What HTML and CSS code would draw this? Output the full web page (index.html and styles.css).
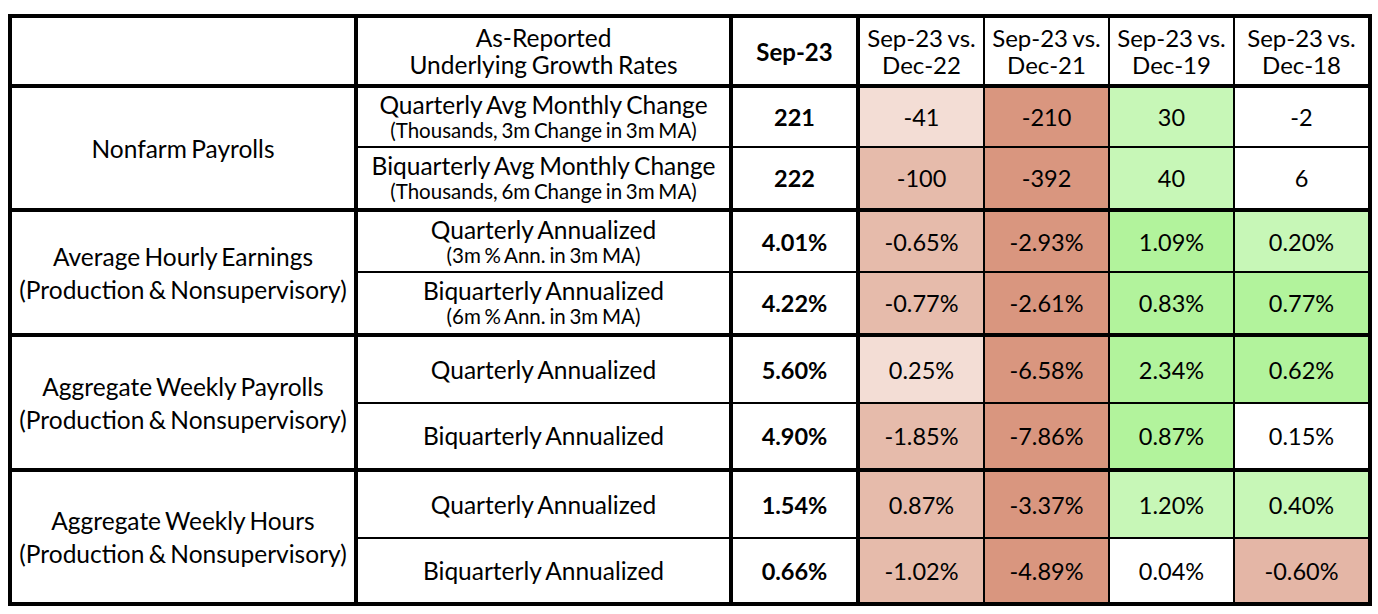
FILE: index.html
```html
<!DOCTYPE html>
<html>
<head>
<meta charset="utf-8">
<link rel="stylesheet" href="styles.css">
</head>
<body>
<table class="grid">
  <colgroup>
    <col class="w-label"><col class="w-desc"><col class="w-cur">
    <col class="w-d1"><col class="w-d2"><col class="w-d3"><col class="w-d4">
  </colgroup>
  <thead>
    <tr class="h-head">
      <th class="label"></th>
      <th class="desc">As-Reported<br>Underlying Growth Rates</th>
      <th class="cur">Sep-23</th>
      <th>Sep-23 vs.<br>Dec-22</th>
      <th>Sep-23 vs.<br>Dec-21</th>
      <th>Sep-23 vs.<br>Dec-19</th>
      <th>Sep-23 vs.<br>Dec-18</th>
    </tr>
  </thead>
  <tbody>
    <tr class="h-a group">
      <td class="label" rowspan="2">Nonfarm Payrolls</td>
      <td class="desc">Quarterly Avg Monthly Change<span class="sub">(Thousands, 3m Change in 3m MA)</span></td>
      <td class="cur">221</td>
      <td class="pink-1">-41</td>
      <td class="red">-210</td>
      <td class="green-1">30</td>
      <td>-2</td>
    </tr>
    <tr class="h-b">
      <td class="desc">Biquarterly Avg Monthly Change<span class="sub">(Thousands, 6m Change in 3m MA)</span></td>
      <td class="cur">222</td>
      <td class="pink-2">-100</td>
      <td class="red">-392</td>
      <td class="green-1">40</td>
      <td>6</td>
    </tr>
    <tr class="h-c group">
      <td class="label" rowspan="2">Average Hourly Earnings<br>(Production &amp; Nonsupervisory)</td>
      <td class="desc">Quarterly Annualized<span class="sub">(3m % Ann. in 3m MA)</span></td>
      <td class="cur">4.01%</td>
      <td class="pink-2">-0.65%</td>
      <td class="red">-2.93%</td>
      <td class="green-2">1.09%</td>
      <td class="green-1">0.20%</td>
    </tr>
    <tr class="h-d">
      <td class="desc">Biquarterly Annualized<span class="sub">(6m % Ann. in 3m MA)</span></td>
      <td class="cur">4.22%</td>
      <td class="pink-2">-0.77%</td>
      <td class="red">-2.61%</td>
      <td class="green-2">0.83%</td>
      <td class="green-2">0.77%</td>
    </tr>
    <tr class="h-e group">
      <td class="label" rowspan="2">Aggregate Weekly Payrolls<br>(Production &amp; Nonsupervisory)</td>
      <td class="desc">Quarterly Annualized</td>
      <td class="cur">5.60%</td>
      <td class="pink-1">0.25%</td>
      <td class="red">-6.58%</td>
      <td class="green-2">2.34%</td>
      <td class="green-2">0.62%</td>
    </tr>
    <tr class="h-f">
      <td class="desc">Biquarterly Annualized</td>
      <td class="cur">4.90%</td>
      <td class="pink-2">-1.85%</td>
      <td class="red">-7.86%</td>
      <td class="green-2">0.87%</td>
      <td>0.15%</td>
    </tr>
    <tr class="h-g group">
      <td class="label" rowspan="2">Aggregate Weekly Hours<br>(Production &amp; Nonsupervisory)</td>
      <td class="desc">Quarterly Annualized</td>
      <td class="cur">1.54%</td>
      <td class="pink-2">0.87%</td>
      <td class="red">-3.37%</td>
      <td class="green-1">1.20%</td>
      <td class="green-1">0.40%</td>
    </tr>
    <tr class="h-h">
      <td class="desc">Biquarterly Annualized</td>
      <td class="cur">0.66%</td>
      <td class="pink-2">-1.02%</td>
      <td class="red">-4.89%</td>
      <td>0.04%</td>
      <td class="pink-3">-0.60%</td>
    </tr>
  </tbody>
</table>
</body>
</html>
```

FILE: styles.css
```css
html, body {
  margin: 0;
  padding: 0;
  background: #ffffff;
}

body {
  padding: 14px 0 0 8px;
  font-family: Lato, "Open Sans", "Liberation Sans", sans-serif;
  color: #000;
}

.grid {
  border-collapse: collapse;
  table-layout: fixed;
  width: 1360px;
  border: 4px solid #000;
}

.w-label { width: 346px; }
.w-desc { width: 375px; }
.w-cur { width: 127px; }
.w-d1 { width: 126px; }
.w-d2 { width: 125px; }
.w-d3 { width: 125px; }
.w-d4 { width: 136px; }

.grid th,
.grid td {
  border: 2px solid #000;
  padding: 0;
  text-align: center;
  vertical-align: middle;
  font-size: 23.5px;
  line-height: 26px;
  font-weight: 400;
  word-spacing: -1px;
}

.grid thead th {
  border-bottom: 4px solid #000;
  font-size: 24px;
  line-height: 27px;
}

.grid .label {
  border-right: 4px solid #000;
  font-size: 24.5px;
  line-height: 33px;
  word-spacing: -2px;
}

.grid .desc {
  border-right: 4px solid #000;
  font-size: 24.5px;
  word-spacing: -1.5px;
}

.grid .cur {
  border-right: 4px solid #000;
  font-weight: 700;
}

.grid tr.group > td {
  border-top: 4px solid #000;
}

.sub {
  display: block;
  font-size: 20.5px;
  line-height: 24px;
  word-spacing: -1.5px;
}

.h-head { height: 70px; }
.h-a { height: 61px; }
.h-b { height: 63px; }
.h-c { height: 62px; }
.h-d { height: 63px; }
.h-e { height: 68px; }
.h-f { height: 67px; }
.h-g { height: 68px; }
.h-h { height: 66px; }

.pink-1 { background: #f3ddd5; }
.pink-2 { background: #e6bbab; }
.pink-3 { background: #e4b6a6; }
.red { background: #d9967f; }
.green-1 { background: #c7f7b7; }
.green-2 { background: #b2f39c; }
```
